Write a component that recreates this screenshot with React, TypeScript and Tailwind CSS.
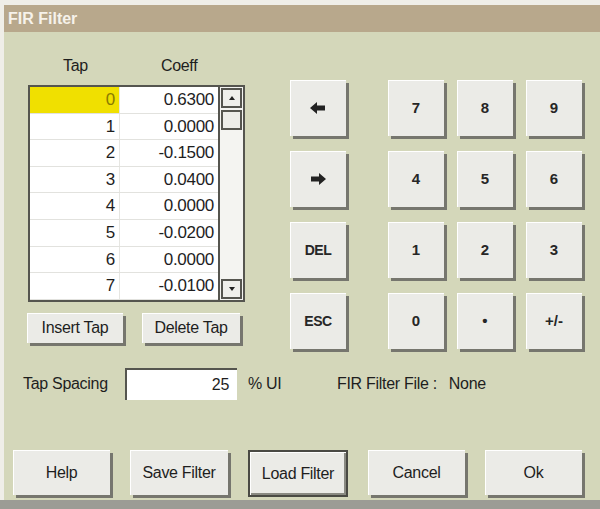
import React from "react";

const rows: [string, string][] = [
  ["0", "0.6300"],
  ["1", "0.0000"],
  ["2", "-0.1500"],
  ["3", "0.0400"],
  ["4", "0.0000"],
  ["5", "-0.0200"],
  ["6", "0.0000"],
  ["7", "-0.0100"],
];

function Arrow({ dir }: { dir: "left" | "right" }) {
  return (
    <svg width="16" height="12" viewBox="0 0 16 12" className={dir === "right" ? "rotate-180" : ""}>
      <path d="M0 6 L7 0 L7 3.5 L15 3.5 L15 8.5 L7 8.5 L7 12 Z" fill="#222" />
    </svg>
  );
}

function Key({ children }: { children: React.ReactNode }) {
  return (
    <div className="w-[56px] h-[56px] bg-[#ebebe7] shadow-[3px_3px_0_#76766e,inset_1px_1px_0_#ffffff] flex items-center justify-center text-[15px] font-bold text-[#262626]">
      {children}
    </div>
  );
}

function Btn({ w, h, children, focus }: { w: string; h: string; children: React.ReactNode; focus?: boolean }) {
  return (
    <div
      className={`${w} ${h} bg-[#ebebe7] flex items-center justify-center text-[16px] text-[#1e1e1e] tracking-[-0.3px] ${
        focus
          ? "border-2 border-[#4a4a44] shadow-[inset_1px_1px_0_#ffffff,inset_-2px_-2px_0_#8a8a82]"
          : "shadow-[3px_3px_0_#76766e,inset_1px_1px_0_#ffffff]"
      }`}
    >
      {children}
    </div>
  );
}

export default function App() {
  return (
    <div className="w-[600px] h-[509px] bg-[#efeee8] flex flex-col font-['Liberation_Sans',Arial,sans-serif] overflow-hidden">
      <div className="h-[5px] shrink-0" />
      <div className="flex flex-1 pl-[4px] min-h-0">
        <div className="flex-1 flex flex-col">
          <div className="h-[27px] shrink-0 bg-[#b8a88c] text-[#f6f2ea] font-bold text-[16px] flex items-center pl-[4px]">
            FIR Filter
          </div>
          <div className="flex-1 bg-[#d4d7ba] flex flex-col">
            <div className="flex mt-[24px]">
              <div className="ml-[24px] w-[217px] flex flex-col">
                <div className="h-[20px] flex items-center text-[16px] text-[#1e1e1e] tracking-[-0.3px]">
                  <span className="ml-[35px]">Tap</span>
                  <span className="ml-[73px]">Coeff</span>
                </div>
                <div className="mt-[9px] h-[217px] border-2 border-[#55554f] bg-white flex">
                  <div className="w-[188px] flex flex-col">
                    {rows.map(([t, c], i) => (
                      <div key={t} className="flex h-[26.6px] border-b border-[#e2e2de] text-[17px] text-[#1e1e1e] tracking-[-0.3px]">
                        <div
                          className={`w-[90px] flex items-center justify-end pr-[4px] border-r border-[#e6e6e2] ${
                            i === 0 ? "bg-[#f0e000] text-[#8a7c00]" : ""
                          }`}
                        >
                          {t}
                        </div>
                        <div className="flex-1 flex items-center justify-end pr-[4px]">{c}</div>
                      </div>
                    ))}
                  </div>
                  <div className="flex-1 border-l-2 border-[#55554f] bg-[#f4f4f1] flex flex-col items-center pt-[1px] pb-[1px]">
                    <div className="w-[21px] h-[20px] border-2 border-[#55554f] bg-[#efefeb] flex items-center justify-center">
                      <svg width="6" height="4" viewBox="0 0 6 4"><path d="M0 4 L3 0 L6 4 Z" fill="#222" /></svg>
                    </div>
                    <div className="mt-[2px] w-[21px] h-[20px] border-2 border-[#55554f] bg-[#ecece8]" />
                    <div className="flex-1" />
                    <div className="w-[21px] h-[20px] border-2 border-[#55554f] bg-[#efefeb] flex items-center justify-center">
                      <svg width="6" height="4" viewBox="0 0 6 4"><path d="M0 0 L6 0 L3 4 Z" fill="#222" /></svg>
                    </div>
                  </div>
                </div>
                <div className="mt-[11px] flex">
                  <div className="-ml-[1px]">
                    <Btn w="w-[96px]" h="h-[30px]">Insert Tap</Btn>
                  </div>
                  <div className="ml-[19px]">
                    <Btn w="w-[98px]" h="h-[30px]">Delete Tap</Btn>
                  </div>
                </div>
              </div>
              <div className="ml-[45px] mt-[24px] flex">
                <div className="flex flex-col gap-[15px]">
                  <Key><Arrow dir="left" /></Key>
                  <Key><Arrow dir="right" /></Key>
                  <Key><span className="text-[14px] tracking-[-0.5px]">DEL</span></Key>
                  <Key><span className="text-[14px] tracking-[-0.5px]">ESC</span></Key>
                </div>
                <div className="ml-[42px] grid grid-cols-[56px_56px_56px] gap-x-[13px] gap-y-[15px] content-start">
                  {["7", "8", "9", "4", "5", "6", "1", "2", "3", "0", "•", "+/-"].map((k) => (
                    <Key key={k}>{k}</Key>
                  ))}
                </div>
              </div>
            </div>
            <div className="mt-[18px] h-[33px] flex items-center text-[16px] text-[#1e1e1e] tracking-[-0.3px]">
              <span className="ml-[19px] w-[102px]">Tap Spacing</span>
              <div className="w-[112px] h-[32px] bg-white border-t-2 border-l-2 border-[#55554f] flex items-center justify-end pr-[8px]">
                25
              </div>
              <span className="ml-[11px] w-[89px]">% UI</span>
              <span>FIR Filter File :</span>
              <span className="ml-[12px]">None</span>
            </div>
            <div className="mt-auto mb-[3px] flex ml-[9px] gap-[20px]">
              <Btn w="w-[97px]" h="h-[45px]">Help</Btn>
              <Btn w="w-[98px]" h="h-[45px]">Save Filter</Btn>
              <Btn w="w-[100px]" h="h-[47px]" focus>Load Filter</Btn>
              <Btn w="w-[97px]" h="h-[45px]">Cancel</Btn>
              <Btn w="w-[97px]" h="h-[45px]">Ok</Btn>
            </div>
          </div>
        </div>
      </div>
      <div className="h-[9px] shrink-0 bg-[#9c9c95]" />
    </div>
  );
}
